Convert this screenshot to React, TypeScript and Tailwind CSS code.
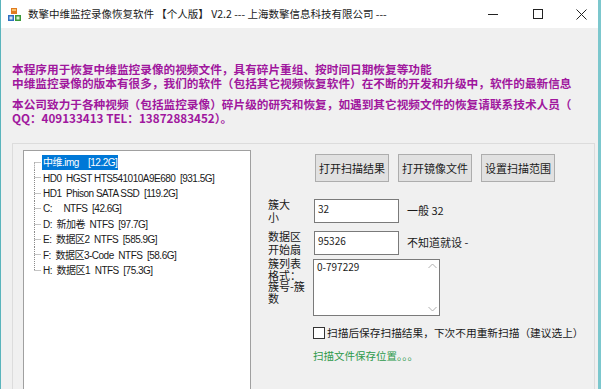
const cjk = "font-['Noto_Sans_CJK_SC','Microsoft_YaHei',sans-serif]";

const treeItems = [
  "HD0  HGST HTS541010A9E680  [931.5G]",
  "HD1  Phison SATA SSD  [119.2G]",
  "C:     NTFS  [42.6G]",
  "D:  新加卷  NTFS  [97.7G]",
  "E:  数据区2  NTFS  [585.9G]",
  "F:  数据区3-Code  NTFS  [58.6G]",
  "H:  数据区1  NTFS  [75.3G]",
];

function AppIcon() {
  return (
    <svg width="13" height="13" viewBox="0 0 13 13">
      <rect x="3" y="0" width="6" height="6" fill="#e07a1f" />
      <rect x="4" y="1" width="4" height="2" fill="#f6c06a" />
      <rect x="0" y="7" width="6" height="6" fill="#2f6fc0" />
      <rect x="7" y="7" width="6" height="6" fill="#3a9a3a" />
      <rect x="1.5" y="8.5" width="3" height="3" fill="#cfe0f6" />
      <rect x="8.5" y="8.5" width="3" height="3" fill="#d7efd0" />
    </svg>
  );
}

function Connector({ first, last }: { first?: boolean; last?: boolean }) {
  return (
    <svg width="8" height="15.4" viewBox="0 0 8 15.4" className="shrink-0">
      <path
        d={`M0.5 ${first ? 7.7 : 0} L0.5 ${last ? 7.7 : 15.4} M0.5 7.5 L7 7.5`}
        stroke="#8a8a8a"
        strokeWidth="1"
        strokeDasharray="1 1"
        fill="none"
      />
    </svg>
  );
}

function TreeRow({ label, first, last, selected }: { label: string; first?: boolean; last?: boolean; selected?: boolean }) {
  return (
    <div className="flex h-[15.4px] items-stretch">
      <Connector first={first} last={last} />
      <div
        className={`flex items-center whitespace-pre px-[1px] ${
          selected ? "bg-[#0078d7] text-white" : "text-[#1a1a1a]"
        }`}
      >
        {label}
      </div>
    </div>
  );
}

export default function App() {
  return (
    <div className={`flex h-[389px] w-[601px] flex-col overflow-hidden bg-[#f0f0f0] ${cjk}`}>
      <div className="flex h-full flex-col border-l border-r-[3px] border-l-[#5ab4bc] border-r-[#7cc7cd]">
        {/* title bar */}
        <div className="flex h-[28px] shrink-0 items-center bg-white text-[10.5px] text-[#1a1a1a]">
          <div className="ml-[7px] mr-[7px]">
            <AppIcon />
          </div>
          <span className="whitespace-pre">数擎中维监控录像恢复软件 【个人版】 V2.2 --- 上海数擎信息科技有限公司 ---</span>
          <div className="ml-auto mr-[-4px] flex h-full items-center">
            <div className="flex w-[45px] justify-center">
              <div className="h-px w-[10px] bg-[#222]" />
            </div>
            <div className="flex w-[45px] justify-center">
              <div className="h-[10px] w-[10px] border border-[#222]" />
            </div>
            <div className="flex w-[42px] justify-center">
              <svg width="11" height="11" viewBox="0 0 11 11">
                <path d="M0.5 0.5 L10.5 10.5 M10.5 0.5 L0.5 10.5" stroke="#222" strokeWidth="1" />
              </svg>
            </div>
          </div>
        </div>

        {/* info text */}
        <div className="mt-[34px] pl-[11px] text-[11.67px] font-bold leading-[14px] text-[#a0179e]">
          <div className="whitespace-nowrap">本程序用于恢复中维监控录像的视频文件，具有碎片重组、按时间日期恢复等功能</div>
          <div className="whitespace-nowrap">中维监控录像的版本有很多，我们的软件（包括其它视频恢复软件）在不断的开发和升级中，软件的最新信息</div>
          <div className="mt-[7px] whitespace-nowrap">本公司致力于各种视频（包括监控录像）碎片级的研究和恢复，如遇到其它视频文件的恢复请联系技术人员（</div>
          <div className="whitespace-nowrap">QQ：409133413 TEL：13872883452）。</div>
        </div>

        {/* group box */}
        <div className="ml-[11px] mr-[3px] mt-[18px] flex flex-1 border border-b-0 border-[#dcdcdc]">
          {/* tree */}
          <div className="ml-[10px] mt-[6px] w-[228px] shrink-0 border border-b-0 border-[#a0a0a0] bg-white pl-[10px] pt-[4px] font-['Liberation_Sans','Noto_Sans_CJK_SC',sans-serif] text-[10px] tracking-[-0.5px]">
            <TreeRow label="中维.img    [12.2G]" first selected />
            {treeItems.map((t, i) => (
              <TreeRow key={t} label={t} last={i === treeItems.length - 1} />
            ))}
          </div>

          {/* right panel */}
          <div className="flex flex-1 flex-col pl-[17px] pt-[10px] text-[11px] text-[#1a1a1a]">
            <div className="ml-[47px] flex gap-[9px]">
              {["打开扫描结果", "打开镜像文件", "设置扫描范围"].map((b) => (
                <div
                  key={b}
                  className="flex h-[28px] w-[74px] items-center justify-center border border-[#adadad] bg-[#e1e1e1] text-[11px]"
                >
                  {b}
                </div>
              ))}
            </div>

            <div className="mt-[16px] grid grid-cols-[46px_auto_1fr] items-center gap-y-[7px] leading-[12.5px]">
              <div className="whitespace-nowrap">
                簇大
                <br />小
              </div>
              <div className="flex h-[24px] w-[85px] items-start border border-[#7a7a7a] bg-white px-[3px] pt-[3px] text-[10px]">32</div>
              <div className="pl-[8px]">一般 32</div>

              <div className="whitespace-nowrap">
                数据区
                <br />开始扇
              </div>
              <div className="flex h-[24px] w-[85px] items-start border border-[#7a7a7a] bg-white px-[3px] pt-[3px] text-[10px]">95326</div>
              <div className="pl-[8px]">不知道就设 -</div>

              <div className="-mt-[4px] self-start whitespace-nowrap leading-[11.7px]">
                簇列表
                <br />格式：
                <br />簇号-簇
                <br />数
              </div>
              <div className="col-span-2 -ml-[1px] -mt-[3px] flex h-[57px] w-[127px] self-start border border-[#7a7a7a] bg-white text-[10px]">
                <div className="flex-1 px-[3px] pt-[1px]">0-797229</div>
                <div className="flex w-[14px] flex-col items-center justify-between py-[3px]">
                  <svg width="9" height="6" viewBox="0 0 9 6">
                    <path d="M0.5 5 L4.5 1 L8.5 5" stroke="#b0b0b0" fill="none" />
                  </svg>
                  <svg width="9" height="6" viewBox="0 0 9 6">
                    <path d="M0.5 1 L4.5 5 L8.5 1" stroke="#b0b0b0" fill="none" />
                  </svg>
                </div>
              </div>
            </div>

            <div className="ml-[45px] mt-[9px] flex items-center">
              <div className="h-[12px] w-[12px] border border-[#333] bg-white" />
              <span className="ml-[2px] text-[10.7px]">扫描后保存扫描结果，下次不用重新扫描（建议选上）</span>
            </div>
            <div className="ml-[45px] mt-[7px] text-[10.5px] text-[#2e9a4c]">扫描文件保存位置。。。</div>
          </div>
        </div>
      </div>
    </div>
  );
}
